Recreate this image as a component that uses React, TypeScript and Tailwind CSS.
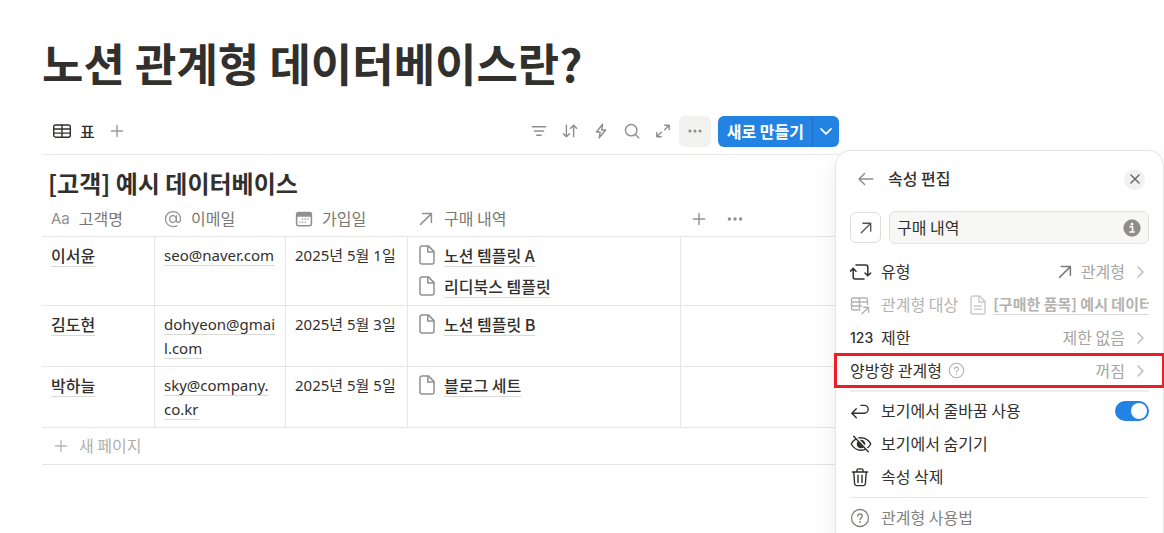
import { Fragment, type ReactNode } from 'react';

type IconProps = { className?: string };

function Svg({ className = '', box = 20, width = 1.3, children }: { className?: string; box?: number; width?: number; children: ReactNode }) {
  return (
    <svg
      viewBox={`0 0 ${box} ${box}`}
      fill="none"
      stroke="currentColor"
      strokeWidth={width}
      strokeLinecap="round"
      strokeLinejoin="round"
      aria-hidden="true"
      className={`shrink-0 ${className}`}
    >
      {children}
    </svg>
  );
}

const TableIcon = ({ className }: IconProps) => (
  <Svg className={className} width={1.4}>
    <rect x="1.7" y="4" width="16.6" height="12.2" rx="2" />
    <path d="M1.7 8h16.6M1.7 12.1h16.6M10 4v12.2" />
  </Svg>
);

const PlusIcon = ({ className }: IconProps) => (
  <Svg className={className} width={1.4}>
    <path d="M10 4.4v11.2M4.4 10h11.2" />
  </Svg>
);

const FilterIcon = () => (
  <Svg className="size-5" width={1.5}>
    <path d="M3.4 5.8h13.2M5.4 10h9.2M7.8 14.2h4.4" />
  </Svg>
);

const SortIcon = () => (
  <Svg className="size-5" width={1.4}>
    <path d="M6.4 4.2v11.4M3.4 12.7l3 3 3-3M13.6 15.8V4.4M10.6 7.3l3-3 3 3" />
  </Svg>
);

const BoltIcon = () => (
  <Svg className="size-5" width={1.4}>
    <path d="M11.6 3.2 5.4 11h3.8l-1 5.8L14.6 9h-3.9z" />
  </Svg>
);

const SearchIcon = () => (
  <Svg className="size-5" width={1.4}>
    <circle cx="9.2" cy="9.2" r="5.7" />
    <path d="m13.4 13.4 3.4 3.4" />
  </Svg>
);

const ExpandIcon = () => (
  <Svg className="size-5" width={1.4}>
    <path d="M11.8 4.2h4.4v4.4M16 4.4l-4.4 4.4M8.2 15.8H3.8v-4.4M4 15.6l4.4-4.4" />
  </Svg>
);

const DotsIcon = ({ className }: IconProps) => (
  <Svg className={className} width={0}>
    <g fill="currentColor">
      <circle cx="4.4" cy="10" r="1.7" />
      <circle cx="10" cy="10" r="1.7" />
      <circle cx="15.6" cy="10" r="1.7" />
    </g>
  </Svg>
);

const ChevronDownIcon = () => (
  <Svg className="size-4" box={16} width={1.7}>
    <path d="m3 5.8 5 5 5-5" />
  </Svg>
);

const ChevronRightIcon = () => (
  <Svg className="size-4 text-[#b5b5b3]" box={16} width={1.3}>
    <path d="m5 3 5 5-5 5" />
  </Svg>
);

const ArrowUpRightIcon = ({ className }: IconProps) => (
  <Svg className={className} box={16} width={1.5}>
    <path d="M2.6 13.4 13.4 2.6M4.4 2.6h9v9" />
  </Svg>
);

const AtIcon = () => (
  <Svg className="size-[18px]" width={1.4}>
    <circle cx="10" cy="10" r="3.7" />
    <path d="M13.7 6.3v5.2c0 1.4.9 2.2 2.1 2.2 1.6 0 2.6-1.6 2.6-3.9 0-4.6-3.5-8-8.3-8-4.9 0-8.5 3.6-8.5 8.3s3.6 8.3 8.5 8.3c1.6 0 3-.3 4.2-.8" />
  </Svg>
);

const CalendarIcon = () => (
  <Svg className="size-[18px]" width={1.7}>
    <rect x="1.8" y="2.8" width="16.4" height="14.8" rx="2.2" />
    <path d="M2 4h16v2.6H2z" fill="currentColor" />
    <path d="M8.3 10h.1M11.3 10h.1M14.3 10h.1M5.4 13.5h.1M8.3 13.5h.1M11.3 13.5h.1" strokeWidth="1.6" />
  </Svg>
);

const PageIcon = ({ lines = false, className = '' }: { lines?: boolean; className?: string }) => (
  <Svg className={`size-5 ${className}`} width={1.5}>
    <path d="M5 .9h6.4L17 6.6v10.5a2 2 0 0 1-2 2H5a2 2 0 0 1-2-2V2.9a2 2 0 0 1 2-2z" />
    <path d="M10.8 1.2V7h6" />
    {lines && <path d="M6.6 11h6.8M6.6 14.3h6.8" />}
  </Svg>
);

const BackIcon = () => (
  <Svg className="size-5 text-[#8e8b86]" width={1.4}>
    <path d="M16.8 10H3.2M8.6 4.4 3 10l5.6 5.6" />
  </Svg>
);

const CloseIcon = () => (
  <Svg className="size-3" box={12} width={1.5}>
    <path d="m2 2 8 8M10 2l-8 8" />
  </Svg>
);

const InfoIcon = () => (
  <Svg className="size-[18px] text-[#8e8d8b]" width={0}>
    <circle cx="10" cy="10" r="9.6" fill="currentColor" />
    <circle cx="10" cy="5.7" r="1.5" fill="#fff" />
    <path d="M7.8 8.7h2.8v5.6M7.6 14.5h4.9" stroke="#fff" strokeWidth="1.7" />
  </Svg>
);

const TypeIcon = () => (
  <svg
    viewBox="0 0 22 20"
    fill="none"
    stroke="currentColor"
    strokeWidth="1.5"
    strokeLinecap="round"
    strokeLinejoin="round"
    aria-hidden="true"
    className="h-5 w-[22px] shrink-0"
  >
    <path d="M6 3h9.800a2 2 0 0 1 2 2v8.600M15 11l2.800 2.800 2.800-2.800M14 17H5.200a2 2 0 0 1-2-2V6.400M.4 9.200l2.800-2.800L6 9.200" />
  </svg>
);

const TargetIcon = () => (
  <Svg className="size-5" width={1.4}>
    <path d="M9.2 15H3.5a2 2 0 0 1-2-2V5a2 2 0 0 1 2-2h12a2 2 0 0 1 2 2v4.500M1.500 7h16M1.500 11h10M9.500 3v12M12 18.800l6.500-6.500M13.500 12.200h5v5" />
  </Svg>
);

const QuestionIcon = ({ className }: IconProps) => (
  <Svg className={className} width={1.3}>
    <circle cx="10" cy="10" r="8.5" />
    <path d="M7.7 8.2c0-1.400 1-2.200 2.300-2.200s2.300.8 2.300 2.100c0 1.700-2.200 1.800-2.200 3.500" />
    <path d="M10.100 14h.01" strokeWidth="1.8" />
  </Svg>
);

const WrapIcon = () => (
  <Svg className="size-5" width={1.4}>
    <path d="M6.3 7.8 1.8 12.2l4.5 4.5M2 12.2h12.3a3.9 3.9 0 0 0 0-7.8H11" />
  </Svg>
);

const HideIcon = () => (
  <Svg className="size-[22px]" box={22} width={1.4}>
    <path d="M1.200 11C3.500 7 7 4.800 11 4.800s7.500 2.200 9.800 6.200c-2.300 4-5.800 6.200-9.800 6.200S3.500 15 1.200 11z" />
    <circle cx="11" cy="11" r="3.6" fill="currentColor" />
    <path d="M4.9 3.3 19 18.3" stroke="#fff" strokeWidth="2.2" />
    <path d="M3.7 3.2 18.3 18.8" />
  </Svg>
);

const TrashIcon = () => (
  <Svg className="size-5" width={1.4}>
    <path d="M2.300 5h15.400M7 4.800V3.200c0-.8.6-1.300 1.300-1.300h3.400c.7 0 1.300.5 1.300 1.300v1.600M3.800 5.200l.8 11.600c.1 1.100.8 1.800 1.900 1.800h7c1.100 0 1.800-.7 1.900-1.800l.8-11.600M8 8.200v7.200M12 8.200v7.200" />
  </Svg>
);

const toolbarActions = [
  { label: '필터', icon: <FilterIcon /> },
  { label: '정렬', icon: <SortIcon /> },
  { label: '자동화', icon: <BoltIcon /> },
  { label: '검색', icon: <SearchIcon /> },
  { label: '전체 보기', icon: <ExpandIcon /> },
];

const customers = [
  { name: '이서윤', email: 'seo@naver.com', joined: '2025년 5월 1일', items: ['노션 템플릿 A', '리디북스 템플릿'] },
  { name: '김도현', email: 'dohyeon@gmail.com', joined: '2025년 5월 3일', items: ['노션 템플릿 B'] },
  { name: '박하늘', email: 'sky@company.co.kr', joined: '2025년 5월 5일', items: ['블로그 세트'] },
];

const linkLine = 'underline decoration-[#d9d9d7] decoration-1 underline-offset-4 [text-decoration-skip-ink:none]';
const cell = 'border-r border-b border-[#e6e6e4] pt-1.5 pl-[9px] align-top';
const latin = "font-['Noto_Sans','Noto_Sans_CJK_KR',sans-serif] text-[15px]";

function Toolbar() {
  return (
    <div className="mt-4 flex h-[47px] items-center justify-between border-b border-[#e9e9e7]">
      <div className="flex items-center gap-2 pl-2.5">
        <button type="button" className="flex items-center gap-2 text-base font-medium">
          <TableIcon className="size-5" />
          표
        </button>
        <button type="button" aria-label="보기 추가" className="ml-1 text-[#9b9a97]">
          <PlusIcon className="size-5" />
        </button>
      </div>
      <div className="flex items-center">
        <div className="flex items-center gap-[11px] text-[#8e8d8a]">
          {toolbarActions.map((action) => (
            <button key={action.label} type="button" aria-label={action.label}>
              {action.icon}
            </button>
          ))}
        </div>
        <button
          type="button"
          aria-label="더 보기"
          className="ml-1.5 flex h-[31px] w-8 items-center justify-center rounded-md bg-[#f2f2f1] text-[#8e8d8a]"
        >
          <DotsIcon className="size-[18px]" />
        </button>
        <div className="ml-[7px] flex h-[31px] overflow-hidden rounded-md bg-[#2383e2] text-white">
          <button type="button" className="pr-2 pl-[9px] text-base leading-[31px] font-bold">
            새로 만들기
          </button>
          <button type="button" aria-label="템플릿 선택" className="flex w-[27px] items-center justify-center border-l border-[#1e6fc0]">
            <ChevronDownIcon />
          </button>
        </div>
      </div>
    </div>
  );
}

function ColumnHeader({ icon, label }: { icon: ReactNode; label: string }) {
  return (
    <th scope="col" className="pl-[9px] text-left font-normal">
      <div className="flex items-center gap-[9px]">
        {icon}
        <span className="pb-0.5">{label}</span>
      </div>
    </th>
  );
}

// lets a long address break after its dots before it breaks inside a word
function Email({ address }: { address: string }) {
  return (
    <a href="#" className={linkLine}>
      {address.split('.').map((part, i) => (
        <Fragment key={i}>
          {i > 0 && '.'}
          {i === 1 && <wbr />}
          {part}
        </Fragment>
      ))}
    </a>
  );
}

function CustomerTable() {
  return (
    <table className="w-full table-fixed border-separate border-spacing-0 text-base leading-6">
      <colgroup>
        <col className="w-[113px]" />
        <col className="w-[131px]" />
        <col className="w-[122px]" />
        <col className="w-[273px]" />
        <col />
      </colgroup>
      <thead>
        <tr className="h-9 text-[#787774] [&>th]:border-b [&>th]:border-[#e6e6e4]">
          <ColumnHeader icon={<span className="font-['Inter'] text-[15px] text-[#91918e]">Aa</span>} label="고객명" />
          <ColumnHeader icon={<span className="text-[#91918e]"><AtIcon /></span>} label="이메일" />
          <ColumnHeader icon={<span className="text-[#91918e]"><CalendarIcon /></span>} label="가입일" />
          <ColumnHeader icon={<ArrowUpRightIcon className="mx-px size-4 text-[#91918e]" />} label="구매 내역" />
          <th scope="col" className="font-normal text-[#91918e]">
            <div className="flex items-center gap-4 pl-2">
              <button type="button" aria-label="속성 추가">
                <PlusIcon className="size-5" />
              </button>
              <button type="button" aria-label="표 옵션">
                <DotsIcon className="size-5" />
              </button>
            </div>
          </th>
        </tr>
      </thead>
      <tbody>
        {customers.map((customer) => (
          <tr key={customer.name}>
            <td className={`${cell} font-medium`}>
              <a href="#" className={linkLine}>
                {customer.name}
              </a>
            </td>
            <td className={`${cell} ${latin} pr-2 pb-1.5 break-words`}>
              <Email address={customer.email} />
            </td>
            <td className={`${cell} ${latin} whitespace-nowrap`}>{customer.joined}</td>
            <td className={`${cell} pb-[7px]`}>
              <ul className="flex flex-col gap-[7px]">
                {customer.items.map((item) => (
                  <li key={item}>
                    <a href="#" className="flex items-center gap-[7px] font-medium">
                      <PageIcon className="text-[#91918e]" />
                      <span className={linkLine}>{item}</span>
                    </a>
                  </li>
                ))}
              </ul>
            </td>
            <td className="border-b border-[#e6e6e4]" />
          </tr>
        ))}
      </tbody>
    </table>
  );
}

function MenuRow({ icon, label, children, className = '' }: { icon?: ReactNode; label: string; children?: ReactNode; className?: string }) {
  return (
    <button type="button" className={`relative flex h-[33px] w-full items-center text-left ${className}`}>
      {icon && <span className="flex w-[31px] shrink-0 items-center">{icon}</span>}
      <span className="shrink-0 pb-0.5">{label}</span>
      {children}
    </button>
  );
}

function RowValue({ icon, text }: { icon?: ReactNode; text: string }) {
  return (
    <span className="ml-auto flex items-center gap-2 text-[#a5a4a1]">
      {icon}
      <span className="pb-0.5">{text}</span>
      <ChevronRightIcon />
    </span>
  );
}

function PropertyPanel() {
  return (
    <aside className="absolute top-[150px] right-0 w-[329px] rounded-t-2xl border border-b-0 border-[#e6e6e4] bg-white px-[14px] pt-3 pb-2 text-base leading-6 shadow-[0_8px_24px_rgba(0,0,0,0.08)]">
      <header className="flex h-8 items-center pr-1 pl-1.5">
        <button type="button" aria-label="뒤로">
          <BackIcon />
        </button>
        <h3 className="ml-3 pb-0.5 font-medium">속성 편집</h3>
        <button type="button" aria-label="닫기" className="ml-auto flex size-[21px] items-center justify-center rounded-full bg-[#f1f1f0] text-[#6b6a67]">
          <CloseIcon />
        </button>
      </header>

      <div className="mt-4 flex items-center gap-2">
        <button type="button" aria-label="아이콘 변경" className="flex size-[31px] items-center justify-center rounded-md border border-[#dededc]">
          <ArrowUpRightIcon className="size-3.5 text-[#55534e]" />
        </button>
        <div className="flex h-[33px] min-w-0 flex-1 items-center rounded-md border border-[#e2e2e0] bg-[#f7f7f5] px-[7px]">
          <input type="text" aria-label="속성 이름" defaultValue="구매 내역" className="min-w-0 flex-1 bg-transparent pb-0.5 outline-none" />
          <InfoIcon />
        </div>
      </div>

      <div className="mt-[11px]">
        <MenuRow icon={<TypeIcon />} label="유형">
          <RowValue icon={<ArrowUpRightIcon className="size-4 text-[#7d7c79]" />} text="관계형" />
        </MenuRow>
        <MenuRow icon={<TargetIcon />} label="관계형 대상" className="text-[#b3b2af]">
          <span className="ml-2.5 flex min-w-0 flex-1 items-center gap-[5px]">
            <PageIcon lines className="text-[#cdccca]" />
            <span className={`overflow-hidden pb-0.5 text-[15px] font-bold whitespace-nowrap ${linkLine}`}>[구매한 품목] 예시 데이터베이스</span>
          </span>
        </MenuRow>
        <MenuRow icon={<span className="font-['Inter'] text-sm font-medium">123</span>} label="제한">
          <RowValue text="제한 없음" />
        </MenuRow>
        <MenuRow label="양방향 관계형">
          <QuestionIcon className="ml-1.5 size-[17px] text-[#b3b2af]" />
          <RowValue text="꺼짐" />
          <span className="pointer-events-none absolute -inset-x-4 -inset-y-px border-3 border-[#ee1c25]" />
        </MenuRow>
      </div>

      <hr className="mt-[3px] mb-0.5 border-t-2 border-[#ededec]" />

      <label className="flex h-[33px] items-center">
        <span className="flex w-[31px] items-center">
          <WrapIcon />
        </span>
        <span className="pb-0.5">보기에서 줄바꿈 사용</span>
        <input
          type="checkbox"
          defaultChecked
          className="ml-auto flex h-5 w-[34px] appearance-none items-center rounded-full bg-[#c8c7c4] px-0.5 before:size-4 before:rounded-full before:bg-white checked:justify-end checked:bg-[#2383e2]"
        />
      </label>
      <MenuRow icon={<HideIcon />} label="보기에서 숨기기" />
      <MenuRow icon={<TrashIcon />} label="속성 삭제" />

      <hr className="mt-1 mb-[3px] border-[#e9e9e7]" />

      <MenuRow icon={<QuestionIcon className="size-5" />} label="관계형 사용법" className="text-[#82817e]" />
    </aside>
  );
}

export default function App() {
  return (
    <div className="relative h-screen overflow-hidden bg-white font-['Noto_Sans_CJK_KR','Noto_Sans',sans-serif] text-[#32302c]">
      <main className="pt-9 pr-[325px] pl-[42px]">
        <h1 className="pb-0.5 text-[45px] leading-[54px] font-bold whitespace-nowrap">노션 관계형 데이터베이스란?</h1>
        <Toolbar />
        <h2 className="flex h-[46px] items-center pt-2.5 pl-1.5 text-2xl font-bold">[고객] 예시 데이터베이스</h2>
        <CustomerTable />
        <button type="button" className="flex h-[37px] w-full items-center gap-2 border-b border-[#e6e6e4] pl-[9px] text-[#b0afac]">
          <PlusIcon className="size-5 text-[#b9b8b5]" />
          <span className="pb-0.5">새 페이지</span>
        </button>
      </main>
      <PropertyPanel />
    </div>
  );
}
